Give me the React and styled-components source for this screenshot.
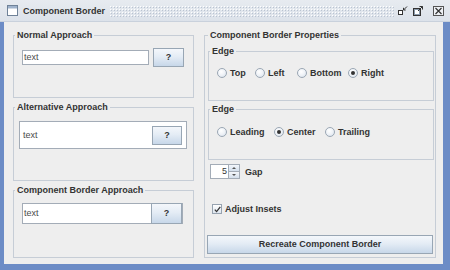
import React from 'react';
import styled, { createGlobalStyle } from 'styled-components';

const Global = createGlobalStyle`
  html, body { margin: 0; padding: 0; background: #ffffff; }
  body { font-family: "Liberation Sans", Arial, sans-serif; }
  * { box-sizing: border-box; }
`;

const Window = styled.div`
  width: 450px;
  height: 270px;
  display: flex;
  flex-direction: column;
  background: #6c8cc6;
  overflow: hidden;
`;

const TitleBar = styled.div`
  height: 22px;
  flex: none;
  display: flex;
  align-items: center;
  padding: 0 6px 0 7px;
  background: linear-gradient(#e7ebf0, #dce2ea);
  border-bottom: 1px solid #c9d1dc;
`;

const TitleIcon = styled.svg`
  width: 11px;
  height: 11px;
  flex: none;
`;

const TitleText = styled.div`
  margin-left: 5px;
  font: bold 9px/12px "Liberation Sans", Arial, sans-serif;
  color: #333;
  white-space: nowrap;
`;

const Bumps = styled.div`
  flex: 1;
  height: 12px;
  margin: 0 4px 0 4px;
  background-image: radial-gradient(circle, #ffffff 0.6px, transparent 0.9px),
    radial-gradient(circle, #b9c3d1 0.6px, transparent 0.9px);
  background-size: 3px 3px, 3px 3px;
  background-position: 0 0, 1px 1px;
`;

const Controls = styled.div`
  display: flex;
  align-items: center;
  gap: 5px;
`;

const CtrlIcon = styled.svg`
  width: ${p => p.$w || 10}px;
  height: 10px;
  margin-left: ${p => p.$ml || 0}px;
`;

const Client = styled.div`
  flex: 1;
  margin: 0 7px 6px 4px;
  background: #eeeeee;
  display: flex;
  gap: 10px;
  padding: 7px 7px 6px 9px;
`;

const Column = styled.div`
  width: ${p => p.$w}px;
  display: flex;
  flex-direction: column;
  gap: 3px;
`;

const Group = styled.fieldset`
  margin: ${p => p.$margin || '0'};
  padding: ${p => p.$pad || '0'};
  border: 1px solid #c6cdd6;
  min-width: 0;
  height: ${p => (p.$h ? p.$h + 'px' : 'auto')};
  flex: ${p => (p.$grow ? 1 : 'none')};
  display: flex;
  flex-direction: column;
`;

const Legend = styled.legend`
  margin-left: 1px;
  padding: 0 2px;
  font: bold 9px/12px "Liberation Sans", Arial, sans-serif;
  color: #333;
`;

const Row = styled.div`
  display: flex;
  align-items: center;
  gap: ${p => p.$gap || 0}px;
  margin: ${p => p.$margin || '0'};
`;

const TextField = styled.div`
  width: ${p => p.$w}px;
  height: ${p => p.$h}px;
  border: 1px solid #a3acb7;
  background: #ffffff;
  display: flex;
  align-items: center;
  padding-left: 1px;
  font: 9px/11px "Liberation Sans", Arial, sans-serif;
  color: #4a4a4a;
`;

const FieldText = styled.span`
  flex: 1;
`;

const QButton = styled.div`
  width: ${p => p.$w}px;
  height: ${p => p.$h}px;
  flex: none;
  border: 1px solid #98a6b4;
  background: linear-gradient(#f4f7fb 0%, #e4ecf5 45%, #c7d7e9 100%);
  display: flex;
  align-items: center;
  justify-content: center;
  font: bold 9px/11px "Liberation Sans", Arial, sans-serif;
  color: #333;
`;

const CompoundField = styled.div`
  width: ${p => p.$w}px;
  height: ${p => p.$h}px;
  border: 1px solid #a3acb7;
  background: #ffffff;
  display: flex;
  align-items: center;
  padding: ${p => p.$pad || '0'};
  font: 9px/11px "Liberation Sans", Arial, sans-serif;
  color: #4a4a4a;
`;

const RadioItem = styled.div`
  display: flex;
  align-items: center;
  gap: 3px;
  width: ${p => (p.$w ? p.$w + 'px' : 'auto')};
  flex: none;
  font: bold 9px/12px "Liberation Sans", Arial, sans-serif;
  color: #333;
`;

const RadioDot = styled.span`
  width: 10px;
  height: 10px;
  border-radius: 50%;
  border: 1px solid #9ba7b4;
  background: radial-gradient(circle at 40% 35%, #ffffff 0%, #eef2f7 50%, #d4dde8 100%);
  display: flex;
  align-items: center;
  justify-content: center;
  &::after {
    content: '';
    width: 4px;
    height: 4px;
    border-radius: 50%;
    background: ${p => (p.$on ? '#333' : 'transparent')};
  }
`;

const Spinner = styled.div`
  display: flex;
  height: 15px;
  margin: 4px 0 0 3px;
  align-items: center;
`;

const SpinField = styled.div`
  width: 19px;
  height: 15px;
  border: 1px solid #a3acb7;
  background: #fff;
  font: 9px/13px "Liberation Sans", Arial, sans-serif;
  color: #333;
  text-align: right;
  padding-right: 1px;
`;

const SpinButtons = styled.div`
  width: 11px;
  height: 15px;
  display: flex;
  flex-direction: column;
`;

const SpinBtn = styled.div`
  flex: 1;
  border: 1px solid #a3acb7;
  border-top: ${p => (p.$down ? 'none' : '1px solid #a3acb7')};
  border-left: none;
  background: linear-gradient(#f4f7fb, #d3dfec);
  display: flex;
  align-items: center;
  justify-content: center;
  &::after {
    content: '';
    border-left: 2px solid transparent;
    border-right: 2px solid transparent;
    ${p => (p.$down ? 'border-top: 2px solid #555;' : 'border-bottom: 2px solid #555;')}
  }
`;

const Label = styled.span`
  font: bold 9px/12px "Liberation Sans", Arial, sans-serif;
  color: #333;
  margin-left: ${p => p.$ml || 0}px;
`;

const CheckBox = styled.span`
  width: 10px;
  height: 10px;
  border: 1px solid #97a3b0;
  background: linear-gradient(#ffffff, #dde5ee);
  display: flex;
  align-items: center;
  justify-content: center;
`;

const BigButton = styled.div`
  margin-top: auto;
  margin-bottom: 3px;
  margin-right: 1px;
  height: 19px;
  border: 1px solid #98a6b4;
  background: linear-gradient(#f4f7fb 0%, #e4ecf5 45%, #c7d7e9 100%);
  display: flex;
  align-items: center;
  justify-content: center;
  font: bold 9px/11px "Liberation Sans", Arial, sans-serif;
  color: #333;
`;

function Radio({ label, on, w }) {
  return (
    <RadioItem $w={w}>
      <RadioDot $on={on} />
      {label}
    </RadioItem>
  );
}

export default function App() {
  return (
    <>
      <Global />
      <Window>
        <TitleBar>
          <TitleIcon viewBox="0 0 11 11">
            <rect x="0.5" y="0.5" width="10" height="10" fill="#fff" stroke="#6f8298" />
            <rect x="1" y="1" width="9" height="2.5" fill="#9fb3cc" />
          </TitleIcon>
          <TitleText>Component Border</TitleText>
          <Bumps />
          <Controls>
            <CtrlIcon viewBox="0 0 10 10">
              <rect x="0.5" y="4.5" width="4" height="4" fill="#fff" stroke="#333" />
              <path d="M9 0.5 L5.5 4 M5.5 1.8 L5.5 4 L7.7 4" stroke="#333" fill="none" />
            </CtrlIcon>
            <CtrlIcon viewBox="0 0 10 10">
              <rect x="0.5" y="2.5" width="7" height="7" fill="#fff" stroke="#333" />
              <rect x="1.5" y="3.5" width="5" height="5" fill="none" stroke="#8a9aab" />
              <path d="M5 5 L9.5 0.5 M6.5 0.5 L9.5 0.5 L9.5 3.5" stroke="#333" fill="none" />
            </CtrlIcon>
            <CtrlIcon viewBox="0 0 11 10" $w={11} $ml={5}>
              <rect x="0.5" y="0.5" width="10" height="9" fill="#eef1f5" stroke="#555" />
              <path d="M2.5 2 L8.5 8 M8.5 2 L2.5 8" stroke="#333" strokeWidth="1.2" />
            </CtrlIcon>
          </Controls>
        </TitleBar>
        <Client>
          <Column $w={181}>
            <Group $h={69}>
              <Legend>Normal Approach</Legend>
              <Row $gap={4} $margin="7px 0 0 8px">
                <TextField $w={127} $h={15}>text</TextField>
                <QButton $w={31} $h={19}>?</QButton>
              </Row>
            </Group>
            <Group $h={80}>
              <Legend>Alternative Approach</Legend>
              <Row $margin="8px 0 0 5px">
                <CompoundField $w={168} $h={28} $pad="0 4px 0 3px">
                  <FieldText>text</FieldText>
                  <QButton $w={30} $h={19}>?</QButton>
                </CompoundField>
              </Row>
            </Group>
            <Group $h={74}>
              <Legend>Component Border Approach</Legend>
              <Row $margin="7px 0 0 8px">
                <CompoundField $w={161} $h={21} $pad="0 0 0 1px">
                  <FieldText>text</FieldText>
                  <QButton $w={31} $h={21}>?</QButton>
                </CompoundField>
              </Row>
            </Group>
          </Column>
          <Column $w={232}>
            <Group $grow $pad="0 1px 0 2px">
              <Legend>Component Border Properties</Legend>
              <Group $h={56} $margin="4px 0 0 1px">
                <Legend>Edge</Legend>
                <Row $margin="10px 0 0 8px">
                  <Radio label="Top" w={38} />
                  <Radio label="Left" w={42} />
                  <Radio label="Bottom" w={51} />
                  <Radio label="Right" on />
                </Row>
              </Group>
              <Group $h={57} $margin="2px 0 0 1px">
                <Legend>Edge</Legend>
                <Row $margin="11px 0 0 8px">
                  <Radio label="Leading" w={57} />
                  <Radio label="Center" on w={51} />
                  <Radio label="Trailing" />
                </Row>
              </Group>
              <Spinner>
                <SpinField>5</SpinField>
                <SpinButtons>
                  <SpinBtn />
                  <SpinBtn $down />
                </SpinButtons>
                <Label $ml={5}>Gap</Label>
              </Spinner>
              <Row $margin="24px 0 0 5px" $gap={3}>
                <CheckBox>
                  <svg width="7" height="7" viewBox="0 0 7 7">
                    <path d="M0.8 3.6 L2.6 5.6 L6.3 0.8" stroke="#333" strokeWidth="1.3" fill="none" />
                  </svg>
                </CheckBox>
                <Label>Adjust Insets</Label>
              </Row>
              <BigButton>Recreate Component Border</BigButton>
            </Group>
          </Column>
        </Client>
      </Window>
    </>
  );
}
